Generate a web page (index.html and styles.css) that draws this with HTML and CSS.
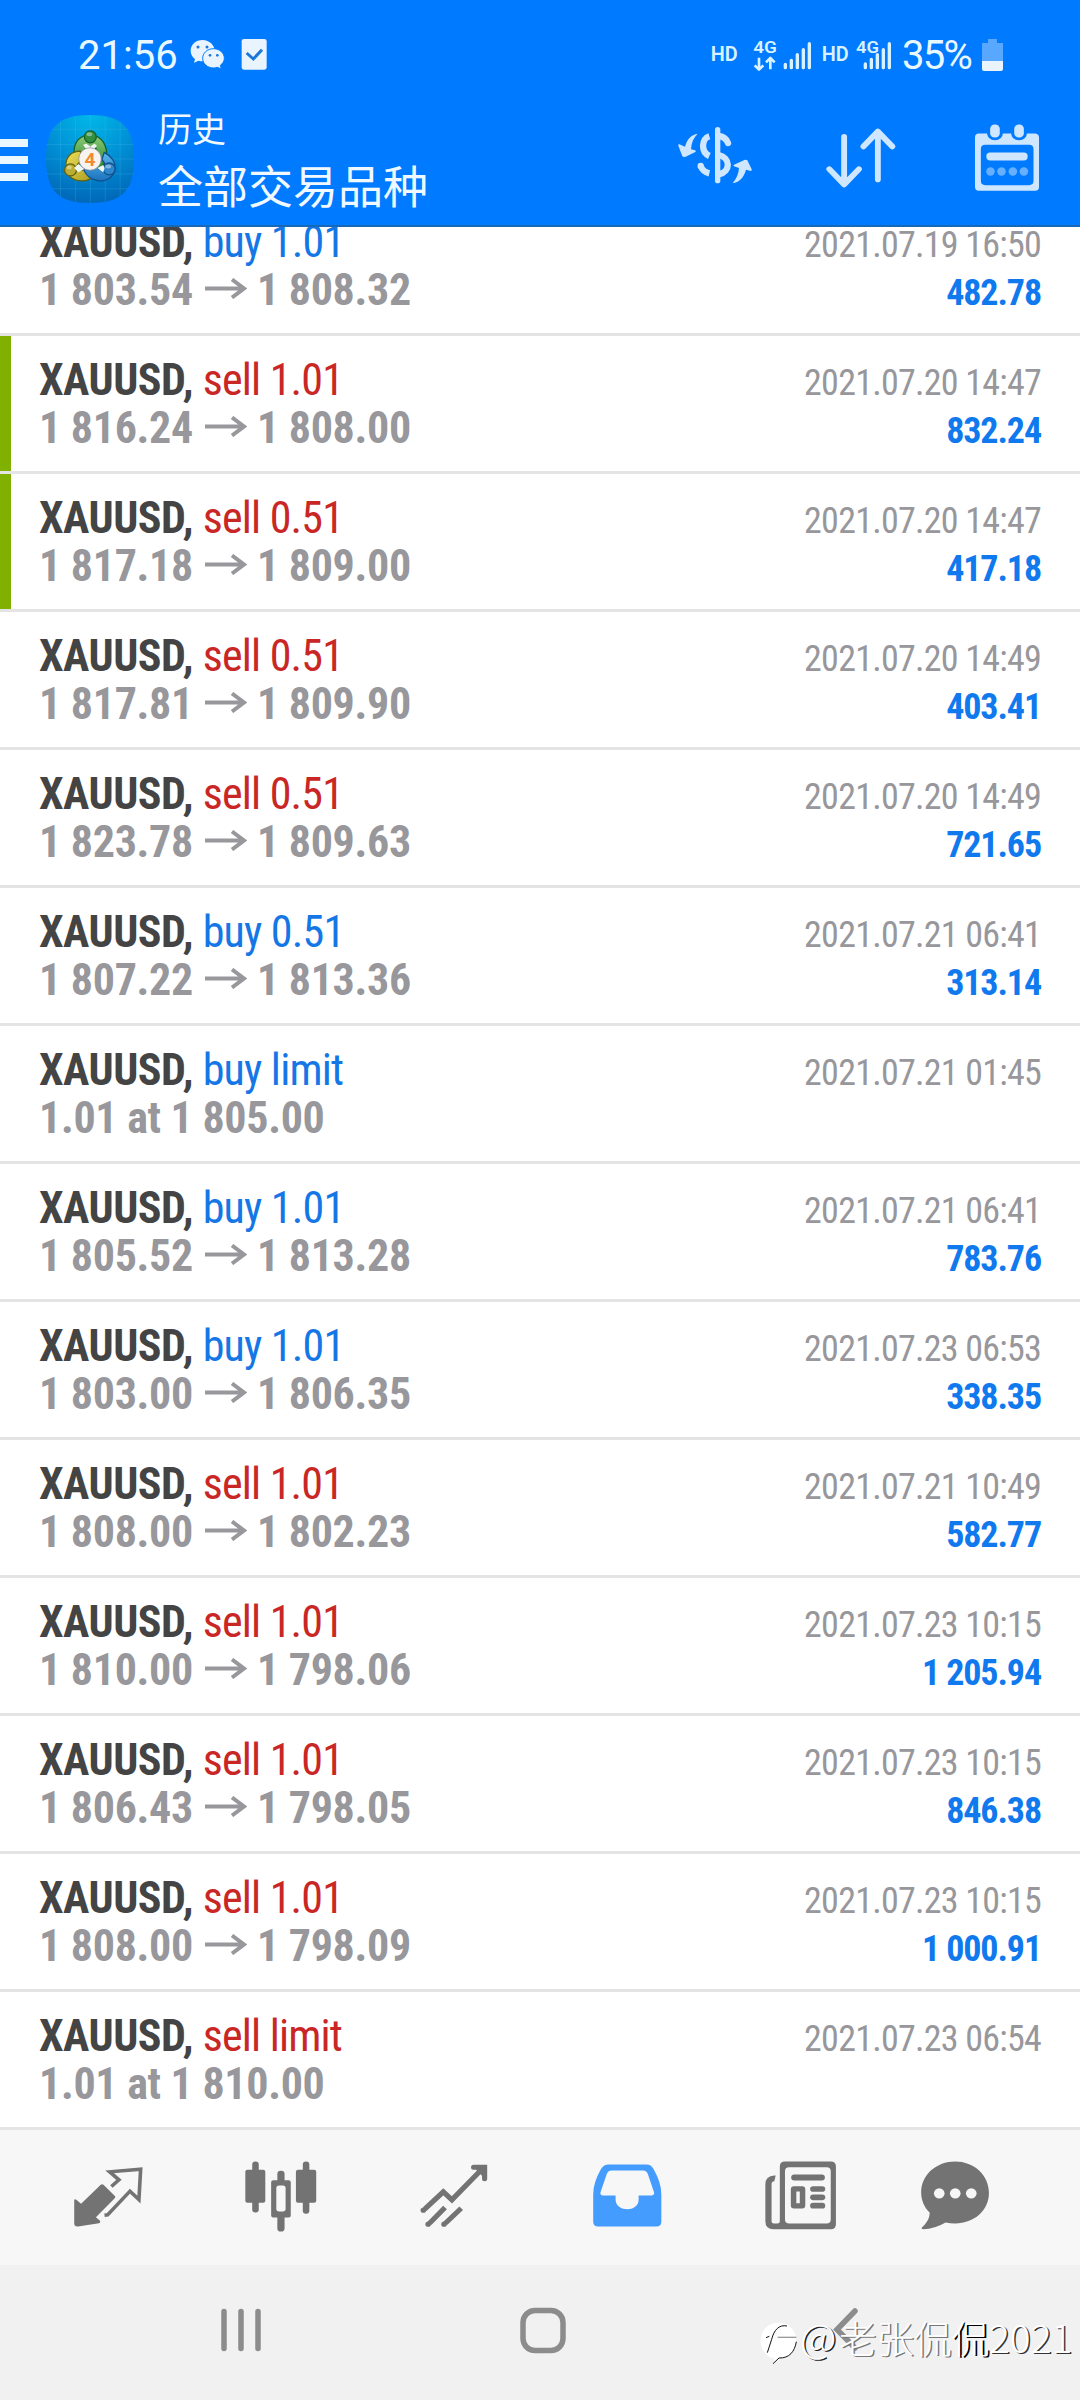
FILE: index.html
```html
<!DOCTYPE html>
<html lang="zh-CN">
<head>
<meta charset="utf-8">
<title>历史</title>
<link rel="stylesheet" href="styles.css">
</head>
<body>
<header class="header">
  <div class="status">
    <span class="clock">21:56</span>
    <svg class="notifications" viewBox="0 0 300 150">
      <g fill="#e9f4ff">
        <path d="M68 30C47 30 32 44 32 62c0 11 5 19 13 25l-3 11 14-6c4 1 8 2 12 2 21 0 36-13 36-31S88 30 68 30z"/>
        <path stroke="#007aff" stroke-width="3" d="M101 56c-19 0-33 13-33 29s14 29 33 29c4 0 8-1 11-2l12 5-3-11c7-5 12-12 12-21 0-16-14-29-32-29z"/>
        <rect x="185" y="27" width="75" height="92" rx="7"/>
      </g>
      <g fill="#1b77d8"><circle cx="54" cy="51" r="4.5"/><circle cx="81" cy="51" r="4.5"/><circle cx="90" cy="76" r="4"/><circle cx="112" cy="76" r="4"/></g>
      <path d="M200 69l20 18 26-28" fill="none" stroke="#1b77d8" stroke-width="9"/>
    </svg>
    <svg class="signal" viewBox="0 0 600 150">
      <g fill="#d8f3ff" class="signal-text">
        <text x="29" y="92" font-size="59" textLength="81" lengthAdjust="spacingAndGlyphs">HD</text>
        <text x="157" y="70" font-size="52" textLength="71" lengthAdjust="spacingAndGlyphs">4G</text>
        <text x="362" y="92" font-size="59" textLength="81" lengthAdjust="spacingAndGlyphs">HD</text>
        <text x="465" y="70" font-size="52" textLength="69" lengthAdjust="spacingAndGlyphs">4G</text>
      </g>
      <g fill="none" stroke="#d8f3ff" stroke-width="8" stroke-linejoin="round"><path d="M174 83v34M161 106l13 13 13-13M208 118V85M195 97l13-13 13 13"/></g>
      <g fill="none" stroke="#d8f3ff" stroke-width="10" stroke-linecap="round"><path d="M253 103v10M271 91v22M289 74v39M307 59v54M325 41v72M493 102v11M511 88v25M529 74v39M547 59v54M565 41v72"/></g>
    </svg>
    <span class="percent">35%</span>
    <svg class="battery" viewBox="0 0 21 33"><path d="M6 1h9v4h6v18H0V5h6z" fill="#59a8ff"/><path d="M0 23h21v8a2 2 0 0 1-2 2H2a2 2 0 0 1-2-2z" fill="#e9f4ff"/></svg>
  </div>
  <div class="appbar">
    <div class="burger"><i></i><i></i><i></i></div>
    <svg class="logo" viewBox="137 75 266 266">
      <defs>
        <radialGradient id="sky" cx=".5" cy="0" r="1"><stop offset="0" stop-color="#00b8e8"/><stop offset=".5" stop-color="#0092d6"/><stop offset="1" stop-color="#0068b8"/></radialGradient>
        <linearGradient id="green" x2="0" y2="1"><stop offset="0" stop-color="#8ecb78"/><stop offset="1" stop-color="#27852d"/></linearGradient>
        <linearGradient id="yellow" x2="1" y2="1"><stop offset="0" stop-color="#eee05a"/><stop offset="1" stop-color="#a99b1c"/></linearGradient>
        <linearGradient id="blue" x2="0" y2="1"><stop offset="0" stop-color="#5db7ec"/><stop offset="1" stop-color="#1a73bd"/></linearGradient>
      </defs>
      <path fill="url(#sky)" d="M270 75c96 0 133 37 133 133s-37 133-133 133-133-37-133-133S174 75 270 75z"/>
      <path d="M181 95v226M226 79v258M271 75v266M316 79v258M361 95v226M153 118h234M138 164h264M137 208h266M138 253h264M153 298h234" stroke="#5cc8f4" stroke-opacity=".3" stroke-width="2"/>
      <g stroke-width="4">
        <path d="M222 184c0-29 20-49 48-49s50 24 50 56c0 22-10 39-25 48l-14-31c9-9 12-18 9-29-8-11-27-11-36 0-6 8-4 16 2 24l-30 5z" fill="url(#green)" stroke="#165f29"/>
        <path d="M241 184c-27 0-44 17-44 43 0 30 19 47 49 47 15 0 27-5 36-14l-26-22c-9 6-17 5-24 0-4-10 1-20 13-21z" fill="url(#yellow)" stroke="#62630f"/>
        <path d="M313 188c20 11 34 26 33 48-2 23-22 39-45 38-27-2-46-17-51-39l39-6c4 8 11 12 22 11 7-9 5-21-5-30z" fill="url(#blue)" stroke="#11508a"/>
        <circle cx="271" cy="141" r="18" fill="#34903e" stroke="#165f29"/>
        <circle cx="211" cy="241" r="18" fill="#bcae35" stroke="#62630f"/>
        <circle cx="328" cy="238" r="18" fill="#2e86cc" stroke="#11508a"/>
      </g>
      <path d="M249 165l10-3 12 8 12-8 8 5-9 12h-23zM222 235l13-12 18 15-18 10zM292 235l18-9 4 10-4 12z" fill="#eef7f2"/>
      <g fill="#fff" fill-opacity=".4"><ellipse cx="268" cy="133" rx="9" ry="6"/><ellipse cx="207" cy="234" rx="8" ry="6"/><ellipse cx="325" cy="231" rx="9" ry="6"/></g>
      <circle cx="270" cy="208" r="34" fill="#f6f3f1" stroke="#7b8285" stroke-width="2"/>
      <text x="270" y="229" class="logo-digit">4</text>
    </svg>
    <div class="titles"><span class="subtitle">历史</span><span class="title">全部交易品种</span></div>
    <div class="actions">
      <svg width="90" height="80" viewBox="0 0 270 240">
        <rect x="135" y="27" width="16" height="169" rx="8" fill="#cfe6ff"/>
        <g fill="none" stroke="#cfe6ff" stroke-width="19"><path d="M118 55c-24 7-26 47 0 59M92 144c4 11 13 19 26 22"/><path d="M146 54c15 2 24 9 28 21" stroke-linecap="round"/><path d="M146 111c36 8 37 50 0 58"/></g>
        <circle cx="92" cy="144" r="9.5" fill="#cfe6ff"/>
        <path fill="#cfe6ff" d="M83 47C66 49 51 62 45 86L28 79q-4-1-3 4l12 32q3 3 10 1l29-14q4-3-1-5l-12-3C64 74 71 59 83 47zM188 195c19-2 33-15 40-40l14 4q4 0 3-5l-13-27q-3-3-9-1l-31 14q-4 3 0 5l15 5c-1 18-8 33-19 45z"/>
      </svg>
      <svg width="84" height="84" viewBox="810 349.5 244 252" preserveAspectRatio="none"><g fill="none" stroke="#cfe6ff" stroke-width="17" stroke-linecap="round" stroke-linejoin="round"><path d="M883 412v141M840 509l43 46 43-46M981 540V396M939 441l42-45 42 45"/></g></svg>
      <svg width="84" height="84" viewBox="1234 349.5 244 252" preserveAspectRatio="none">
        <path fill="#cfe6ff" fill-rule="evenodd" d="M1274 402h24q2 20 23 20t23-20h24q2 20 23 20t23-20h24q11 2 11 12v148q0 12-11 12h-164q-11 0-11-12V414q0-12 11-12zM1293 436q-13 0-13 13v94q0 14 13 14h127q13 0 13-14v-94q0-13-13-13z"/>
        <g fill="#cfe6ff"><rect x="1307" y="375" width="28" height="39" rx="13"/><rect x="1377" y="375" width="28" height="39" rx="13"/><rect x="1296" y="459" width="120" height="24" rx="11"/></g>
        <g fill="#66b0ff"><circle cx="1308" cy="516" r="12.500"/><circle cx="1340" cy="516" r="12.500"/><circle cx="1373" cy="516" r="12.500"/><circle cx="1405" cy="516" r="12.500"/></g>
      </svg>
    </div>
  </div>
</header>
<svg class="defs"><symbol id="arrow" viewBox="0 0 42 21"><path d="M0 10.500h39M27 1.500l12 9-12 9" fill="none" stroke="#97979c" stroke-width="4"/></symbol></svg>
<main class="list">
  <div class="row"><div class="line"><b>XAUUSD, <span class="buy">buy 1.01</span></b><time>2021.07.19 16:50</time></div><div class="line"><span class="price">1 803.54<svg class="to"><use href="#arrow"/></svg>1 808.32</span><em>482.78</em></div></div>
  <div class="row marked"><div class="line"><b>XAUUSD, <span class="sell">sell 1.01</span></b><time>2021.07.20 14:47</time></div><div class="line"><span class="price">1 816.24<svg class="to"><use href="#arrow"/></svg>1 808.00</span><em>832.24</em></div></div>
  <div class="row marked"><div class="line"><b>XAUUSD, <span class="sell">sell 0.51</span></b><time>2021.07.20 14:47</time></div><div class="line"><span class="price">1 817.18<svg class="to"><use href="#arrow"/></svg>1 809.00</span><em>417.18</em></div></div>
  <div class="row"><div class="line"><b>XAUUSD, <span class="sell">sell 0.51</span></b><time>2021.07.20 14:49</time></div><div class="line"><span class="price">1 817.81<svg class="to"><use href="#arrow"/></svg>1 809.90</span><em>403.41</em></div></div>
  <div class="row"><div class="line"><b>XAUUSD, <span class="sell">sell 0.51</span></b><time>2021.07.20 14:49</time></div><div class="line"><span class="price">1 823.78<svg class="to"><use href="#arrow"/></svg>1 809.63</span><em>721.65</em></div></div>
  <div class="row"><div class="line"><b>XAUUSD, <span class="buy">buy 0.51</span></b><time>2021.07.21 06:41</time></div><div class="line"><span class="price">1 807.22<svg class="to"><use href="#arrow"/></svg>1 813.36</span><em>313.14</em></div></div>
  <div class="row"><div class="line"><b>XAUUSD, <span class="buy">buy limit</span></b><time>2021.07.21 01:45</time></div><div class="line"><span class="price">1.01 at 1 805.00</span></div></div>
  <div class="row"><div class="line"><b>XAUUSD, <span class="buy">buy 1.01</span></b><time>2021.07.21 06:41</time></div><div class="line"><span class="price">1 805.52<svg class="to"><use href="#arrow"/></svg>1 813.28</span><em>783.76</em></div></div>
  <div class="row"><div class="line"><b>XAUUSD, <span class="buy">buy 1.01</span></b><time>2021.07.23 06:53</time></div><div class="line"><span class="price">1 803.00<svg class="to"><use href="#arrow"/></svg>1 806.35</span><em>338.35</em></div></div>
  <div class="row"><div class="line"><b>XAUUSD, <span class="sell">sell 1.01</span></b><time>2021.07.21 10:49</time></div><div class="line"><span class="price">1 808.00<svg class="to"><use href="#arrow"/></svg>1 802.23</span><em>582.77</em></div></div>
  <div class="row"><div class="line"><b>XAUUSD, <span class="sell">sell 1.01</span></b><time>2021.07.23 10:15</time></div><div class="line"><span class="price">1 810.00<svg class="to"><use href="#arrow"/></svg>1 798.06</span><em>1 205.94</em></div></div>
  <div class="row"><div class="line"><b>XAUUSD, <span class="sell">sell 1.01</span></b><time>2021.07.23 10:15</time></div><div class="line"><span class="price">1 806.43<svg class="to"><use href="#arrow"/></svg>1 798.05</span><em>846.38</em></div></div>
  <div class="row"><div class="line"><b>XAUUSD, <span class="sell">sell 1.01</span></b><time>2021.07.23 10:15</time></div><div class="line"><span class="price">1 808.00<svg class="to"><use href="#arrow"/></svg>1 798.09</span><em>1 000.91</em></div></div>
  <div class="row"><div class="line"><b>XAUUSD, <span class="sell">sell limit</span></b><time>2021.07.23 06:54</time></div><div class="line"><span class="price">1.01 at 1 810.00</span></div></div>
</main>
<nav class="tabs">
  <svg viewBox="195 142.5 240 240" preserveAspectRatio="none"><path fill="#737373" d="M216 268q2-4 6 0l14 12 57-57q4-4 8 0l34 34q1 4-2 7l-54 56 12 11q3 5-3 7l-61 10q-11 1-11-9z"/><path d="M324 228l22-20-27-24 90-8-5 91-26-25-65 71-9 1" fill="none" stroke="#737373" stroke-width="10.500"/></svg>
  <svg viewBox="697.5 142.5 240 240" preserveAspectRatio="none"><g fill="#737373"><rect x="713" y="178" width="58" height="99" rx="6"/><rect x="733" y="153" width="19" height="153" rx="9"/><rect x="860" y="178" width="59" height="99" rx="6"/><rect x="880" y="153" width="19" height="157" rx="9"/><rect x="806" y="181" width="21" height="40" rx="10"/><rect x="806" y="310" width="21" height="53" rx="10"/><path fill-rule="evenodd" d="M794 209h45q6 0 6 6v100q0 6-6 6h-45q-6 0-6-6V215q0-6 6-6zM811 225q-8 0-8 8v62q0 8 8 8h11q8 0 8-8v-62q0-8-8-8z"/></g></svg>
  <svg viewBox="1199.9 142.5 240 240" preserveAspectRatio="none"><g fill="none" stroke="#737373" stroke-width="15"><path stroke-linejoin="miter" d="M1234 296l54-52 25 24 92-97"/><path d="M1248 338l45-47M1294 338l46-45"/><path stroke-linecap="round" d="M1376 170h32v35"/></g><g fill="#737373"><circle cx="1230" cy="299" r="8"/><circle cx="1244" cy="341" r="8"/><circle cx="1290" cy="341" r="8"/><path d="M1382 177l26-5-2 30z"/></g></svg>
  <svg viewBox="134.100 142.5 240 240" preserveAspectRatio="none"><path fill="#449cff" fill-rule="evenodd" d="M199 162h111q13 0 20 13 23 42 23 76v83q0 14-14 14H169q-14 0-14-14v-83q0-34 23-76 8-13 21-13zM208 180q-9 0-13 9l-19 57q-1 9 8 9h36v13c1 38 67 38 67 0v-13h36q10 0 9-9l-18-55q-4-11-14-11z"/></svg>
  <svg viewBox="636.5 142.5 240 240" preserveAspectRatio="none"><g fill="#737373"><path fill-rule="evenodd" d="M712 153h133q15 0 15 15v173q0 15-15 15H679q-24 0-24-24V222q0-26 26-27h4l-4 17q-8 0-8 9v111q0 7 7 7h10q7 0 7-7V168q0-15 15-15zM724 170q-12 0-12 12v145q0 12 12 12h109q12 0 12-12V182q0-12-12-12z"/><rect x="730" y="192" width="98" height="18" rx="9"/><rect x="785" y="227" width="44" height="17" rx="9"/><rect x="785" y="252" width="44" height="17" rx="9"/><rect x="785" y="277" width="44" height="17" rx="9"/><path fill-rule="evenodd" d="M738 227h24q9 0 9 9v49q0 9-9 9h-24q-9 0-9-9v-49q0-9 9-9zM745 243v35h10v-35z"/></g></svg>
  <svg viewBox="1085.2 142.5 240 240" preserveAspectRatio="none"><path fill="#737373" d="M1205 153c55 0 98 41 98 94s-43 92-98 92q-15 0-28-3-33 20-64 20-9-1-4-6 21-18 22-43c-17-18-25-39-25-61 0-53 44-93 99-93z"/><g fill="#f7f7f7"><circle cx="1158.500" cy="248.500" r="15.500"/><circle cx="1205" cy="248.500" r="15.500"/><circle cx="1251.500" cy="248.500" r="15.500"/></g></svg>
</nav>
<footer class="sysnav">
  <svg width="44" height="46" viewBox="0 0 44 46"><path d="M5 4.500v37M22 4.500v37M39 4.500v37" stroke="#8c8c8c" stroke-width="5.500" stroke-linecap="round"/></svg>
  <svg width="48" height="48" viewBox="0 0 48 48"><rect x="4" y="4.500" width="40" height="40" rx="12" fill="none" stroke="#8c8c8c" stroke-width="5.500"/></svg>
  <svg width="32" height="46" viewBox="0 0 32 46"><path d="M26 4L8 22.500l18 18.500" fill="none" stroke="#8c8c8c" stroke-width="5.500" stroke-linecap="round"/></svg>
  <div class="watermark">
    <svg width="38" height="44" viewBox="31 60 114 132"><path fill="#fff" d="M86 65c31 0 54 23 54 53 0 32-19 51-51 55l-18 14 3-15C50 168 33 148 33 121c0-32 21-56 53-56z"/><path fill="none" stroke="#111" stroke-width="3" d="M53 155l13-40c7-28 22-45 46-40M49 110l10-4M70 188l18-17c31 1 47-19 52-49"/><path d="M84 109h56" stroke="#999" stroke-width="4"/></svg><div class="handle"><span class="at">@</span><span class="soft">老张侃</span><span class="hard">侃</span><span class="year">2021</span></div>
  </div>
</footer>
</body>
</html>
```
FILE: styles.css
```css
* { box-sizing: border-box; }
body { margin: 0; width: 1080px; height: 2400px; overflow: hidden; background: #fff; font-family: "Roboto Condensed", Roboto, sans-serif; }
svg { display: block; flex: none; }
.defs { width: 0; height: 0; overflow: hidden; float: left; }

.header { height: 227px; background: #007aff; border-bottom: 2px solid #1769b8; color: #f0f9ff; }
.status { height: 90px; display: flex; align-items: flex-start; font-family: Roboto, sans-serif; font-size: 40px; line-height: 52px; padding: 30px 77px 0 78px; color: #e9f8ff; }
.clock { width: 102px; }
.notifications { width: 100px; height: 50px; }
.signal { width: 200px; height: 50px; margin-left: auto; }
.signal-text { font-family: Roboto, sans-serif; font-weight: 600; }
.percent { width: 78px; padding-left: 1px; letter-spacing: -1.7px; }
.battery { width: 21px; height: 33px; margin-top: 8px; margin-left: 3px; }

.appbar { height: 135px; display: flex; align-items: center; }
.burger { width: 28px; display: grid; gap: 9.5px; padding-top: 5px; }
.burger i { height: 7.5px; background: #e9f8ff; }
.logo { width: 88px; height: 88px; margin-left: 18px; margin-top: 3px; }
.logo-digit { font: 700 58px Roboto, sans-serif; fill: #f18a32; text-anchor: middle; }
.titles { margin-left: 24px; display: grid; font-family: "Noto Sans CJK SC", sans-serif; padding-top: 2px; }
.subtitle { font-size: 34px; line-height: 52px; }
.title { font-size: 45px; line-height: 62px; }
.actions { margin-left: auto; display: grid; grid-template-columns: repeat(3, 146px); width: 438px; align-items: center; justify-items: center; padding-top: 1px; }

.list { height: 1903px; overflow: hidden; display: flex; flex-direction: column; justify-content: flex-end; }
.row { height: 138px; flex: none; padding: 20px 39px 0 39px; border-bottom: 3px solid #e4e4e4; }
.marked { background: linear-gradient(90deg, #80b000 11px, #fff 11px) padding-box; }
.line { height: 48px; line-height: 48px; display: flex; justify-content: space-between; align-items: baseline; white-space: nowrap; }
.line b { font-size: 44px; letter-spacing: -.5px; color: #444; }
.line b span { font-weight: 400; letter-spacing: -.8px; }
.line .buy { color: #1577e6; }
.line .sell { color: #c92626; }
.price { font-size: 44px; font-weight: 700; letter-spacing: -.3px; color: #97979c; }
.to { width: 42px; height: 21px; display: inline-block; vertical-align: 6px; margin: 0 10px 0 12px; }
.line time { font-size: 36px; letter-spacing: -.75px; color: #97979c; }
.line em { font-style: normal; font-weight: 700; font-size: 36px; letter-spacing: -1.1px; color: #1079ee; }

.tabs { height: 135px; background: #f7f7f7; display: grid; grid-template-columns: repeat(5, 173px) 136px; padding-left: 22px; align-items: center; justify-items: center; }
.tabs svg { width: 82.6px; height: 80px; }
.sysnav { height: 135px; background: #f1f1f1; display: grid; grid-template-columns: repeat(3, 302px); padding-left: 90px; padding-bottom: 5px; align-items: center; justify-items: center; position: relative; }
.watermark { position: absolute; left: 760px; top: 48px; height: 60px; display: flex; align-items: center; font: 300 37.5px/60px "Noto Sans CJK SC", sans-serif; color: #fff; }
.handle { display: flex; align-items: baseline; height: 60px; padding-bottom: 0; margin-top: -14px; }
.handle span { flex: none; }
.at { width: 39px; margin-left: 2px; font-size: 40px; text-shadow: 1.5px 1px 0 #222; }
.soft { text-shadow: 1.5px 1px 0 #777; }
.hard { text-shadow: 2px 1px 0 #000; }
.year { font-size: 39px; text-shadow: 1.5px 1px 0 #333; }
```
